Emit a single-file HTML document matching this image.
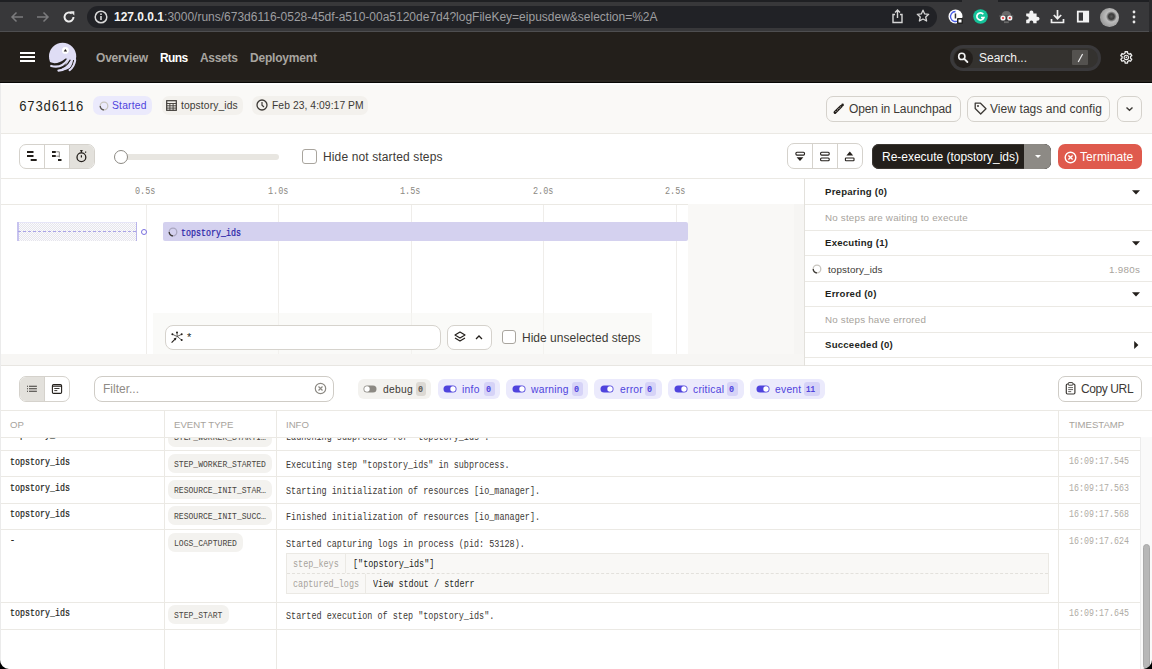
<!DOCTYPE html>
<html><head><meta charset="utf-8">
<style>
*{box-sizing:border-box;margin:0;padding:0}
html,body{width:1152px;height:669px;overflow:hidden;background:#fff;font-family:"Liberation Sans",sans-serif}
.a{position:absolute}
.t{position:absolute;white-space:nowrap;line-height:1}
.mono{font-family:"Liberation Mono",monospace}
svg{position:absolute;overflow:visible}
</style></head><body>
<!-- ================= BROWSER CHROME ================= -->
<div class="a" style="left:0;top:0;width:1152px;height:32px;background:#38383a"></div>
<div class="a" style="left:0;top:0;width:1152px;height:2px;background:#1f2023"></div>
<div class="a" style="left:0;top:31px;width:1152px;height:1px;background:#4e4e50"></div>
<div class="a" style="left:962px;top:0;width:36px;height:2px;background:#38383a;border-radius:0 0 0 0"></div>
<div class="a" style="left:1149px;top:0;width:3px;height:32px;background:#2a2a2c"></div>
<!-- nav arrows -->
<svg style="left:10px;top:11px" width="14" height="12" viewBox="0 0 14 12"><path d="M13 6H2M6.5 1.5L2 6l4.5 4.5" fill="none" stroke="#7b7b7d" stroke-width="1.5"/></svg>
<svg style="left:36px;top:11px" width="14" height="12" viewBox="0 0 14 12"><path d="M1 6h11M7.5 1.5L12 6l-4.5 4.5" fill="none" stroke="#7b7b7d" stroke-width="1.5"/></svg>
<svg style="left:62px;top:10px" width="14" height="14" viewBox="0 0 14 14"><path d="M11.5 7A4.5 4.5 0 1 1 9.8 3.5" fill="none" stroke="#eeeeee" stroke-width="2"/><path d="M8 1.2h4.3v4.3z" fill="#e8e8e8"/></svg>
<!-- url pill -->
<div class="a" style="left:87px;top:6px;width:850px;height:22px;border-radius:11px;background:#212226"></div>
<svg style="left:94px;top:10px" width="14" height="14" viewBox="0 0 14 14"><circle cx="7" cy="7" r="5.8" fill="none" stroke="#dadada" stroke-width="1.5"/><path d="M7 6v4" stroke="#dadada" stroke-width="1.6"/><circle cx="7" cy="4.2" r="0.9" fill="#dadada"/></svg>
<div class="t" style="left:114px;top:11px;font-size:12px;color:#9e9ea0"><span style="color:#f2f2f2;font-weight:bold">127.0.0.1</span>:3000/runs/673d6116-0528-45df-a510-00a5120de7d4?logFileKey=eipusdew&amp;selection=%2A</div>
<!-- share / star -->
<svg style="left:891px;top:9px" width="13" height="15" viewBox="0 0 13 15"><path d="M4 5.5H2v8h9v-8H9M6.5 1v8M4 3.5L6.5 1 9 3.5" fill="none" stroke="#d6d6d6" stroke-width="1.4"/></svg>
<svg style="left:916px;top:9px" width="14" height="14" viewBox="0 0 14 14"><path d="M7 1.2l1.7 3.7 4 .4-3 2.7.9 4L7 10 3.4 12l.9-4-3-2.7 4-.4z" fill="none" stroke="#d6d6d6" stroke-width="1.3" stroke-linejoin="round"/></svg>
<!-- extension icons -->
<svg style="left:948px;top:9px" width="16" height="16" viewBox="0 0 16 16"><circle cx="7.5" cy="7.5" r="7" fill="#fff"/><path d="M7.5 2.5a5 5 0 1 0 3 9" fill="none" stroke="#4a5ee8" stroke-width="1.3"/><rect x="6.7" y="4.5" width="1.5" height="5" fill="#333"/><rect x="9" y="9" width="6" height="6" rx="1" fill="#222"/><rect x="10.5" y="10.5" width="3" height="3" fill="#fff"/></svg>
<svg style="left:973px;top:9px" width="15" height="15" viewBox="0 0 15 15"><circle cx="7.5" cy="7.5" r="7.3" fill="#15c39a"/><path d="M10.3 5.2A3.6 3.6 0 1 0 10.9 8.5H8" fill="none" stroke="#fff" stroke-width="1.7"/></svg>
<svg style="left:998px;top:10px" width="17" height="15" viewBox="998 10 17 15"><path d="M1001.5 15.5Q1002 11 1006.4 11Q1010.8 11 1011.3 15.5z" fill="#6a6a6a"/><rect x="999.3" y="15" width="14" height="2" fill="#555"/><circle cx="1003" cy="18" r="2.6" fill="#f2f2f2"/><circle cx="1009.8" cy="18" r="2.6" fill="#f2f2f2"/><circle cx="1003" cy="18" r="1.1" fill="#e53030"/><circle cx="1009.8" cy="18" r="1.1" fill="#e53030"/><rect x="1004" y="21.3" width="4.8" height="1.8" fill="#6a6a6a"/></svg>
<svg style="left:1025px;top:9px" width="15" height="15" viewBox="1025 9 15 15"><path d="M1026.2 13.6h3.2q-.2-3 2-3t2 3h3.2v3.2q3-.2 3 2t-3 2v2.4h-3.3q.2-2.6-1.9-2.6t-1.9 2.6h-3.3v-3.4q2.6.2 2.6-1.8t-2.6-1.8z" fill="#f4f4f4"/></svg>
<svg style="left:1050px;top:9px" width="15" height="15" viewBox="0 0 15 15"><path d="M7.5 1v8.5M3.8 6l3.7 3.7L11.2 6M1.5 10v3.5h12V10" fill="none" stroke="#f0f0f0" stroke-width="1.7"/></svg>
<svg style="left:1076px;top:10px" width="14" height="14" viewBox="1076 10 14 14"><rect x="1077.8" y="11.6" width="10.4" height="10" fill="none" stroke="#f4f4f4" stroke-width="1.8"/><rect x="1083" y="11.6" width="5.2" height="10" fill="#f4f4f4"/></svg>
<div class="a" style="left:1100px;top:8px;width:18.5px;height:18.5px;border-radius:50%;background:radial-gradient(circle at 60% 45%,#5a5a5a 0,#3a3a3a 18%,#bdbdbd 35%,#9b9b9b 70%,#7a7a7a 100%)"></div>
<svg style="left:1132px;top:10px" width="4" height="14" viewBox="0 0 4 14"><circle cx="2" cy="2" r="1.4" fill="#e8e8e8"/><circle cx="2" cy="7" r="1.4" fill="#e8e8e8"/><circle cx="2" cy="12" r="1.4" fill="#e8e8e8"/></svg>

<!-- ================= DAGSTER NAV ================= -->
<div class="a" style="left:0;top:32px;width:1152px;height:51px;background:#231f1b"></div>
<div class="a" style="left:0;top:80px;width:1152px;height:2px;background:#2a2622"></div>
<div class="a" style="left:0;top:82px;width:1152px;height:1px;background:#080706"></div>
<div class="a" style="left:20px;top:52px;width:15px;height:2px;background:#fff"></div>
<div class="a" style="left:20px;top:56px;width:15px;height:2px;background:#fff"></div>
<div class="a" style="left:20px;top:60px;width:15px;height:2px;background:#fff"></div>
<svg style="left:44px;top:40px" width="36" height="34" viewBox="0 0 36 34">
 <circle cx="18.6" cy="16.4" r="13.6" fill="#dfddf5"/>
 <path d="M2 20Q11 27 21.6 18.4L24 19Q21 31 8 31 L2 31z" fill="#231f1b"/>
 <path d="M7.2 26Q17.5 29 24 19.4" fill="none" stroke="#dfddf5" stroke-width="2.2" stroke-linecap="round"/>
 <path d="M10 29.4Q21 30 26.4 19.8" fill="none" stroke="#231f1b" stroke-width="1.3"/>
 <path d="M14.4 30.6Q24 30.5 28.2 20.2" fill="none" stroke="#dfddf5" stroke-width="2.1" stroke-linecap="round"/>
 <path d="M22 32Q28 29 29.8 20" fill="none" stroke="#231f1b" stroke-width="1.2"/>
 <path d="M25.6 30.2Q30.5 26.5 31.2 20" fill="none" stroke="#dfddf5" stroke-width="2.1" stroke-linecap="round"/>
 <circle cx="21.4" cy="10.4" r="3.4" fill="#fff"/>
 <path d="M19.7 11.6l1.7-2.6 1.7 2.6z" fill="#231f1b"/>
</svg>
<div class="t" style="left:96px;top:52px;font-size:12px;font-weight:bold;color:#a8a5a0;letter-spacing:-0.2px">Overview</div>
<div class="t" style="left:160px;top:52px;font-size:12px;font-weight:bold;color:#fff;letter-spacing:-0.6px">Runs</div>
<div class="t" style="left:200px;top:52px;font-size:12px;font-weight:bold;color:#a8a5a0;letter-spacing:-0.3px">Assets</div>
<div class="t" style="left:250px;top:52px;font-size:12px;font-weight:bold;color:#a8a5a0;letter-spacing:-0.2px">Deployment</div>
<!-- search -->
<div class="a" style="left:950px;top:45px;width:151px;height:26px;border-radius:13px;background:#3a393b"></div>
<div class="a" style="left:953px;top:48px;width:145px;height:20px;border-radius:10px;background:#34322f"></div>
<div class="a" style="left:954px;top:48.5px;width:19px;height:19px;border-radius:50%;background:#231f1c"></div>
<svg style="left:955px;top:50px" width="16" height="16" viewBox="955 50 16 16"><circle cx="961.8" cy="56.4" r="3.1" fill="none" stroke="#f2f2f2" stroke-width="1.6"/><path d="M964.2 58.8l3.2 3.2" stroke="#f2f2f2" stroke-width="1.8" stroke-linecap="round"/></svg>
<div class="t" style="left:979px;top:52px;font-size:12px;color:#f0f0f0">Search...</div>
<div class="a" style="left:1072px;top:50px;width:16px;height:15px;border-radius:1px;background:#54524f"></div>
<svg style="left:1072px;top:50px" width="16" height="15" viewBox="1072 50 16 15"><path d="M1078.2 62l4.4-8" stroke="#eeeeee" stroke-width="1.2"/></svg>
<svg style="left:1118px;top:49px" width="17" height="17" viewBox="1118 49 17 17"><path d="M1124.97 53.31 L1125.09 51.73 L1127.51 51.73 L1127.63 53.31 L1129.18 54.20 L1130.61 53.52 L1131.82 55.61 L1130.51 56.51 L1130.51 58.29 L1131.82 59.19 L1130.61 61.28 L1129.18 60.60 L1127.63 61.49 L1127.51 63.07 L1125.09 63.07 L1124.97 61.49 L1123.42 60.60 L1121.99 61.28 L1120.78 59.19 L1122.09 58.29 L1122.09 56.51 L1120.78 55.61 L1121.99 53.52 L1123.42 54.20z" fill="none" stroke="#eeeeee" stroke-width="1.3" stroke-linejoin="round"/><circle cx="1126.3" cy="57.4" r="2.2" fill="none" stroke="#eeeeee" stroke-width="1.1"/><circle cx="1126.3" cy="57.4" r=".8" fill="#eeeeee"/></svg>

<!-- ================= RUN HEADER ================= -->
<div class="a" style="left:0;top:83px;width:1152px;height:51px;background:#faf9f7;border-bottom:1px solid #ebe9e4"></div>
<div class="a" style="left:0;top:83px;width:1152px;height:2px;background:#ffffff"></div>
<div class="t mono" style="left:19px;top:99px;font-size:13px;color:#231f1b;letter-spacing:0.3px;transform:scaleY(1.18);transform-origin:0 0">673d6116</div>
<div class="a" style="left:93px;top:96px;width:59px;height:19px;border-radius:7px;background:#ebeafc"></div>
<svg style="left:99px;top:101px" width="10" height="10" viewBox="0 0 10 10"><circle cx="5" cy="5" r="3.8" fill="none" stroke="#c8c5bf" stroke-width="1.3"/><path d="M1.2 5A3.8 3.8 0 0 0 5 8.8" fill="none" stroke="#5c5955" stroke-width="1.3"/></svg>
<div class="t" style="left:112px;top:101px;font-size:10.3px;color:#4f43dd;letter-spacing:0.2px">Started</div>
<div class="a" style="left:162px;top:96px;width:81px;height:19px;border-radius:7px;background:#f3f1ed"></div>
<svg style="left:166px;top:100px" width="11" height="11" viewBox="0 0 11 11"><rect x=".7" y=".7" width="9.6" height="9.6" fill="none" stroke="#3d3a36" stroke-width="1.2"/><path d="M.7 3.5h9.6M.7 5.8h9.6M.7 8.1h9.6M3.9 3.5v6.8M7.1 3.5v6.8" stroke="#3d3a36" stroke-width=".9"/></svg>
<div class="t" style="left:181px;top:101px;font-size:10.3px;color:#3d3a36;letter-spacing:0.1px">topstory_ids</div>
<div class="a" style="left:252px;top:96px;width:116px;height:19px;border-radius:7px;background:#f3f1ed"></div>
<svg style="left:256px;top:99px" width="12" height="12" viewBox="0 0 12 12"><circle cx="6" cy="6" r="5" fill="none" stroke="#3d3a36" stroke-width="1.3"/><path d="M6 3v3.2l2 1.8" fill="none" stroke="#3d3a36" stroke-width="1.2"/></svg>
<div class="t" style="left:272px;top:101px;font-size:10.3px;color:#3d3a36;letter-spacing:0.07px">Feb 23, 4:09:17 PM</div>
<!-- header buttons -->
<div class="a" style="left:826px;top:96px;width:135px;height:26px;border-radius:7px;border:1px solid #d5d2cc;background:#faf9f7"></div>
<svg style="left:830px;top:100px" width="18" height="18" viewBox="830 100 18 18"><path d="M835 112.4L841.2 106.2" stroke="#231f1b" stroke-width="2.9" stroke-linecap="round"/><path d="M835.6 111.8L840.6 106.8" stroke="#faf9f7" stroke-width=".9" stroke-dasharray="1 1"/><circle cx="842.6" cy="104.9" r="1.3" fill="#231f1b"/></svg>
<div class="t" style="left:849px;top:103px;font-size:12px;color:#3d3a36;letter-spacing:-0.13px">Open in Launchpad</div>
<div class="a" style="left:967px;top:96px;width:143px;height:26px;border-radius:7px;border:1px solid #d5d2cc;background:#faf9f7"></div>
<svg style="left:974px;top:102px" width="13" height="13" viewBox="0 0 13 13"><path d="M1.2 1.2h5.3l5.5 5.5-5.3 5.3-5.5-5.5z" fill="none" stroke="#3d3a36" stroke-width="1.3" stroke-linejoin="round"/><circle cx="4" cy="4" r="1" fill="#3d3a36"/></svg>
<div class="t" style="left:990px;top:103px;font-size:12px;color:#3d3a36;letter-spacing:0.07px">View tags and config</div>
<div class="a" style="left:1117px;top:96px;width:25px;height:26px;border-radius:7px;border:1px solid #d5d2cc;background:#faf9f7"></div>
<svg style="left:1125px;top:106px" width="9" height="6" viewBox="0 0 9 6"><path d="M1.5 1.5L4.5 4.3 7.5 1.5" fill="none" stroke="#3d3a36" stroke-width="1.4"/></svg>

<!-- ================= TOOLBAR ================= -->
<div class="a" style="left:0;top:134px;width:1152px;height:45px;background:#fff;border-bottom:1px solid #ebe9e4"></div>
<div class="a" style="left:19px;top:144px;width:76px;height:25px;border-radius:7px;border:1px solid #d5d2cc;overflow:hidden">
  <div class="a" style="left:24px;top:0;width:1px;height:25px;background:#d5d2cc"></div>
  <div class="a" style="left:49px;top:0;width:26px;height:25px;background:#e3e1dc;border-left:1px solid #d5d2cc"></div>
</div>
<svg style="left:20px;top:140px" width="25" height="25" viewBox="20 140 25 25"><path d="M27 152h6.5M27 156h6.5M30.7 160h6" stroke="#231f1b" stroke-width="1.9"/></svg>
<svg style="left:45px;top:140px" width="25" height="25" viewBox="45 140 25 25"><path d="M52 152h3.8M52 156h3.8M58 160h3.5" stroke="#231f1b" stroke-width="1.9"/><path d="M56.3 151.8h3v5.6M56.3 156.2h3" fill="none" stroke="#6b6762" stroke-width=".8"/></svg>
<svg style="left:70px;top:140px" width="25" height="25" viewBox="70 140 25 25"><circle cx="81.4" cy="157.2" r="4.4" fill="none" stroke="#231f1b" stroke-width="1.3"/><path d="M80.2 150.6h2.4M81.4 150.6v2.2M81.4 155.2v2.2M85.2 152.6l.9-.9" stroke="#231f1b" stroke-width="1.2"/></svg>
<!-- slider -->
<div class="a" style="left:121px;top:154px;width:158px;height:6px;border-radius:3px;background:#e8e6e1"></div>
<div class="a" style="left:114px;top:150px;width:14px;height:14px;border-radius:50%;background:#fff;border:1.5px solid #8c8983"></div>
<!-- checkbox -->
<div class="a" style="left:302px;top:149px;width:15px;height:15px;border-radius:3px;border:1.5px solid #a9a59e;background:#fff"></div>
<div class="t" style="left:323px;top:151px;font-size:12px;color:#3d3a36;letter-spacing:0.13px">Hide not started steps</div>
<!-- right group -->
<div class="a" style="left:787px;top:143px;width:76px;height:26px;border-radius:7px;border:1px solid #d5d2cc;background:#fff">
  <div class="a" style="left:24px;top:0;width:1px;height:24px;background:#d5d2cc"></div>
  <div class="a" style="left:49px;top:0;width:1px;height:24px;background:#d5d2cc"></div>
</div>
<svg style="left:790px;top:145px" width="22" height="22" viewBox="790 145 22 22"><rect x="795.9" y="152.3" width="8.6" height="2.8" rx="1" fill="none" stroke="#231f1b" stroke-width="1.1"/><path d="M796.6 157.3h6.8L800 161z" fill="#231f1b"/></svg>
<svg style="left:815px;top:145px" width="22" height="22" viewBox="815 145 22 22"><rect x="820.6" y="152.3" width="8.6" height="2.8" rx="1" fill="none" stroke="#231f1b" stroke-width="1.1"/><rect x="820.6" y="158" width="8.6" height="2.8" rx="1" fill="none" stroke="#231f1b" stroke-width="1.1"/></svg>
<svg style="left:840px;top:145px" width="22" height="22" viewBox="840 145 22 22"><path d="M846.4 155.4h6.8L849.8 151.6z" fill="#231f1b"/><rect x="845.4" y="158" width="8.6" height="2.8" rx=".6" fill="none" stroke="#231f1b" stroke-width="1.1"/></svg>
<div class="a" style="left:872px;top:144px;width:179px;height:25px;border-radius:7px;background:#231f1b;overflow:hidden;box-shadow:inset 0 0 0 1px #3a3632">
  <div class="a" style="left:152px;top:0;width:27px;height:25px;background:#8d8a85"></div>
</div>
<div class="t" style="left:882px;top:151px;font-size:12px;color:#fff;letter-spacing:-0.02px">Re-execute (topstory_ids)</div>
<svg style="left:1034px;top:154px" width="8" height="5" viewBox="0 0 8 5"><path d="M1 1h6L4 4z" fill="#fff"/></svg>
<div class="a" style="left:1058px;top:144px;width:84px;height:25px;border-radius:7px;background:#df5a4d"></div>
<svg style="left:1064px;top:150.5px" width="13" height="13" viewBox="0 0 13 13"><circle cx="6.5" cy="6.5" r="5.3" fill="none" stroke="#fff" stroke-width="1.4"/><path d="M4.4 4.4l4.2 4.2M8.6 4.4l-4.2 4.2" stroke="#fff" stroke-width="1.4"/></svg>
<div class="t" style="left:1080px;top:151px;font-size:12px;color:#fff;letter-spacing:0.07px">Terminate</div>

<!-- ================= TIMELINE ================= -->
<div class="a" style="left:0;top:179px;width:805px;height:175px;background:#fff"></div>
<div class="a" style="left:0;top:204px;width:805px;height:1px;background:#ebe9e4"></div>
<!-- tick lines -->
<div class="a" style="left:146px;top:205px;width:1px;height:149px;background:#efedea"></div>
<div class="a" style="left:278px;top:205px;width:1px;height:149px;background:#efedea"></div>
<div class="a" style="left:411px;top:205px;width:1px;height:149px;background:#efedea"></div>
<div class="a" style="left:543px;top:205px;width:1px;height:149px;background:#efedea"></div>
<div class="a" style="left:676px;top:205px;width:1px;height:149px;background:#efedea"></div>
<div class="t mono" style="left:135px;top:187.3px;font-size:8.50px;color:#8c8983;transform:scaleY(1.24);transform-origin:0 0">0.5s</div>
<div class="t mono" style="left:268px;top:187.3px;font-size:8.50px;color:#8c8983;transform:scaleY(1.24);transform-origin:0 0">1.0s</div>
<div class="t mono" style="left:400px;top:187.3px;font-size:8.50px;color:#8c8983;transform:scaleY(1.24);transform-origin:0 0">1.5s</div>
<div class="t mono" style="left:533px;top:187.3px;font-size:8.50px;color:#8c8983;transform:scaleY(1.24);transform-origin:0 0">2.0s</div>
<div class="t mono" style="left:665px;top:187.3px;font-size:8.50px;color:#8c8983;transform:scaleY(1.24);transform-origin:0 0">2.5s</div>
<!-- future region -->
<div class="a" style="left:688px;top:204px;width:106px;height:150px;background:#f9f8f6"></div>
<div class="a" style="left:794px;top:204px;width:10px;height:150px;background:#f6f5f3"></div>
<!-- pre-step dashed box -->
<div class="a" style="left:17px;top:222px;width:120px;height:19px;background:repeating-conic-gradient(#e6e5ec 0 25%,#fbfbfd 0 50%) 0 0/2px 2px;border-top:1px solid #e6e5f7"></div>
<div class="a" style="left:17px;top:222px;width:2px;height:19px;background:#c7c3ef"></div>
<div class="a" style="left:136px;top:222px;width:1px;height:19px;background:#b9b4ea"></div>
<div class="a" style="left:18px;top:231px;width:118px;height:1px;border-top:1px dashed #a9a3e6"></div>
<div class="a" style="left:141px;top:229px;width:6px;height:6px;border-radius:50%;border:1.2px solid #7a70e0"></div>
<!-- step bar -->
<div class="a" style="left:163px;top:222px;width:525px;height:19px;border-radius:2px;background:#d4d1ef"></div>
<svg style="left:168px;top:227px" width="10" height="10" viewBox="0 0 10 10"><circle cx="5" cy="5" r="3.8" fill="none" stroke="#aaa7c0" stroke-width="1.3"/><path d="M1.2 5A3.8 3.8 0 0 0 5 8.8" fill="none" stroke="#3d3a36" stroke-width="1.3"/></svg>
<div class="t mono" style="left:181px;top:229px;font-size:8.33px;color:#2a24a8;-webkit-text-stroke:0.2px #2a24a8;transform:scaleY(1.200);transform-origin:0 0">topstory_ids</div>
<!-- query bar backdrop -->
<div class="a" style="left:153px;top:313px;width:499px;height:41px;background:rgba(246,245,242,0.55)"></div>
<div class="a" style="left:164.5px;top:324.5px;width:276px;height:25.5px;border-radius:8px;border:1.8px solid #d6d3cd;background:#fff"></div>
<svg style="left:168px;top:328px" width="18" height="18" viewBox="168 328 18 18"><path d="M177.2 336.5L177 332.4M177.2 336.5L172.4 334.3M177.2 336.5L181.7 334.3M177.2 336.5L181.7 340.1" stroke="#231f1b" stroke-width=".7"/><circle cx="177" cy="332.4" r="1" fill="#231f1b"/><circle cx="172.4" cy="334.3" r="1" fill="#231f1b"/><circle cx="181.7" cy="334.3" r="1" fill="#231f1b"/><circle cx="181.7" cy="340.1" r="1" fill="#231f1b"/><path d="M171.6 342.7L175.6 338.7" stroke="#231f1b" stroke-width="1.2"/><path d="M176.6 337.6L173.6 338.6 175.6 340.6z" fill="#231f1b"/></svg>
<div class="t" style="left:187px;top:332px;font-size:11px;color:#231f1b">*</div>
<div class="a" style="left:447px;top:325px;width:45px;height:25px;border-radius:7px;border:1px solid #d5d2cc;background:#fff"></div>
<svg style="left:454px;top:331px" width="12" height="12" viewBox="0 0 12 12"><path d="M6 1l5 3-5 3-5-3z" fill="none" stroke="#231f1b" stroke-width="1.2" stroke-linejoin="round"/><path d="M1 7l5 3 5-3" fill="none" stroke="#231f1b" stroke-width="1.2" stroke-linejoin="round"/></svg>
<svg style="left:475px;top:335px" width="8" height="5" viewBox="0 0 8 5"><path d="M1 4l3-3 3 3" fill="none" stroke="#231f1b" stroke-width="1.3"/></svg>
<div class="a" style="left:502px;top:330px;width:14px;height:14px;border-radius:3px;border:1.5px solid #a9a59e;background:#fff"></div>
<div class="t" style="left:522px;top:331.5px;font-size:12px;color:#3d3a36;letter-spacing:0.02px">Hide unselected steps</div>
<!-- splitter -->
<div class="a" style="left:0;top:354px;width:805px;height:12px;background:#f7f6f4"></div>
<div class="a" style="left:0;top:365px;width:1152px;height:2px;background:#e8e6e2"></div>

<!-- ================= RIGHT PANEL ================= -->
<div class="a" style="left:804px;top:179px;width:1px;height:187px;background:#e3e1dc"></div>
<div class="a" style="left:805px;top:179px;width:347px;height:186px;background:#fff"></div>
<div class="a" style="left:805px;top:204px;width:347px;height:1px;background:#ebe9e4"></div>
<div class="a" style="left:805px;top:230px;width:347px;height:1px;background:#ebe9e4"></div>
<div class="a" style="left:805px;top:255px;width:347px;height:1px;background:#ebe9e4"></div>
<div class="a" style="left:805px;top:281px;width:347px;height:1px;background:#ebe9e4"></div>
<div class="a" style="left:805px;top:306px;width:347px;height:1px;background:#ebe9e4"></div>
<div class="a" style="left:805px;top:332px;width:347px;height:1px;background:#ebe9e4"></div>
<div class="a" style="left:805px;top:357px;width:347px;height:1px;background:#ebe9e4"></div>
<div class="t" style="left:825px;top:186.5px;font-size:9.6px;font-weight:bold;color:#231f1b;letter-spacing:0.23px">Preparing (0)</div>
<div class="t" style="left:825px;top:212.5px;font-size:9.8px;color:#a7a39c;letter-spacing:0.2px">No steps are waiting to execute</div>
<div class="t" style="left:825px;top:237.5px;font-size:9.6px;font-weight:bold;color:#231f1b;letter-spacing:0.23px">Executing (1)</div>
<svg style="left:812px;top:264px" width="10" height="10" viewBox="0 0 10 10"><circle cx="5" cy="5" r="3.8" fill="none" stroke="#c8c5bf" stroke-width="1.3"/><path d="M1.2 5A3.8 3.8 0 0 0 5 8.8" fill="none" stroke="#3d3a36" stroke-width="1.3"/></svg>
<div class="t" style="left:828px;top:264.5px;font-size:9.8px;color:#3d3a36;letter-spacing:0.15px">topstory_ids</div>
<div class="t" style="left:1109px;top:264.5px;font-size:9.8px;color:#a7a39c;letter-spacing:0.3px">1.980s</div>
<div class="t" style="left:825px;top:288.5px;font-size:9.6px;font-weight:bold;color:#231f1b;letter-spacing:0.23px">Errored (0)</div>
<div class="t" style="left:825px;top:314.5px;font-size:9.8px;color:#a7a39c;letter-spacing:0.2px">No steps have errored</div>
<div class="t" style="left:825px;top:339.5px;font-size:9.6px;font-weight:bold;color:#231f1b;letter-spacing:0.23px">Succeeded (0)</div>
<svg style="left:1132px;top:190px" width="8" height="5" viewBox="0 0 8 5"><path d="M0 .2h8L4 4.4z" fill="#231f1b"/></svg>
<svg style="left:1132px;top:241px" width="8" height="5" viewBox="0 0 8 5"><path d="M0 .2h8L4 4.4z" fill="#231f1b"/></svg>
<svg style="left:1132px;top:292px" width="8" height="5" viewBox="0 0 8 5"><path d="M0 .2h8L4 4.4z" fill="#231f1b"/></svg>
<svg style="left:1134px;top:341px" width="5" height="8" viewBox="0 0 5 8"><path d="M.2 0v8L4.4 4z" fill="#231f1b"/></svg>

<!-- ================= LOG TOOLBAR ================= -->
<div class="a" style="left:0;top:366px;width:1152px;height:44px;background:#fff"></div>
<div class="a" style="left:0;top:410px;width:1152px;height:1px;background:#ebe9e4"></div>
<div class="a" style="left:19px;top:376px;width:51px;height:26px;border-radius:7px;border:1px solid #d5d2cc;overflow:hidden;background:#fff">
  <div class="a" style="left:0;top:0;width:25px;height:26px;background:#e3e1dc;border-right:1px solid #d5d2cc"></div>
</div>
<svg style="left:25px;top:383px" width="14" height="11" viewBox="25 383 14 11"><path d="M27 386.3h1M27 388.8h1M27 391.3h1M29 386.3h7.9M29 388.8h7.9M29 391.3h7.9" stroke="#3d3a36" stroke-width="1.1"/></svg>
<svg style="left:50px;top:382px" width="14" height="13" viewBox="50 382 14 13"><rect x="52.4" y="384.6" width="9.2" height="8.8" rx="1.2" fill="none" stroke="#231f1b" stroke-width="1.1"/><path d="M52.4 386.2h9.2" stroke="#231f1b" stroke-width="1.1"/><path d="M54.3 388.5h5.2M54.3 390.6h3" stroke="#231f1b" stroke-width=".9"/></svg>
<div class="a" style="left:94px;top:376px;width:240px;height:26px;border-radius:8px;border:1px solid #cfccc6;background:#fff"></div>
<div class="t" style="left:103px;top:383px;font-size:12px;color:#8f8b85">Filter...</div>
<svg style="left:314px;top:382px" width="13" height="13" viewBox="0 0 13 13"><circle cx="6.5" cy="6.5" r="5.2" fill="none" stroke="#8c8983" stroke-width="1.2"/><path d="M4.5 4.5l4 4M8.5 4.5l-4 4" stroke="#8c8983" stroke-width="1.2"/></svg>
<!-- chips -->
<div class="a" style="left:358px;top:379px;width:73px;height:20px;border-radius:6px;background:#f3f2ef"></div>
<svg style="left:363px;top:385px" width="14" height="8" viewBox="0 0 14 8"><rect x=".5" y=".5" width="13" height="7" rx="3.5" fill="#8c8983"/><circle cx="4" cy="4" r="2.7" fill="#fff"/></svg>
<div class="t" style="left:383px;top:384.5px;font-size:10.3px;color:#3d3a36;letter-spacing:0.25px">debug</div>
<div class="a" style="left:416px;top:382px;width:10px;height:14px;border-radius:3px;background:#dcd9d4"></div>
<div class="t mono" style="left:418px;top:385.5px;font-size:8.5px;font-weight:bold;color:#5c5955">0</div>

<div class="a" style="left:438px;top:379px;width:62px;height:20px;border-radius:6px;background:#ebeafc"></div>
<svg style="left:443px;top:385px" width="14" height="8" viewBox="0 0 14 8"><rect x=".5" y=".5" width="13" height="7" rx="3.5" fill="#4f43dd"/><circle cx="10" cy="4" r="2.7" fill="#fff"/></svg>
<div class="t" style="left:462px;top:384.5px;font-size:10.3px;color:#4f43dd;letter-spacing:0.25px">info</div>
<div class="a" style="left:484px;top:382px;width:11px;height:14px;border-radius:3px;background:#d6d3f7"></div>
<div class="t mono" style="left:486px;top:385.5px;font-size:8.5px;font-weight:bold;color:#4f43dd">0</div>

<div class="a" style="left:506px;top:379px;width:82px;height:20px;border-radius:6px;background:#ebeafc"></div>
<svg style="left:512px;top:385px" width="14" height="8" viewBox="0 0 14 8"><rect x=".5" y=".5" width="13" height="7" rx="3.5" fill="#4f43dd"/><circle cx="10" cy="4" r="2.7" fill="#fff"/></svg>
<div class="t" style="left:531px;top:384.5px;font-size:10.3px;color:#4f43dd;letter-spacing:0.25px">warning</div>
<div class="a" style="left:572px;top:382px;width:11px;height:14px;border-radius:3px;background:#d6d3f7"></div>
<div class="t mono" style="left:574px;top:385.5px;font-size:8.5px;font-weight:bold;color:#4f43dd">0</div>

<div class="a" style="left:594px;top:379px;width:68px;height:20px;border-radius:6px;background:#ebeafc"></div>
<svg style="left:600px;top:385px" width="14" height="8" viewBox="0 0 14 8"><rect x=".5" y=".5" width="13" height="7" rx="3.5" fill="#4f43dd"/><circle cx="10" cy="4" r="2.7" fill="#fff"/></svg>
<div class="t" style="left:620px;top:384.5px;font-size:10.3px;color:#4f43dd;letter-spacing:0.25px">error</div>
<div class="a" style="left:645px;top:382px;width:11px;height:14px;border-radius:3px;background:#d6d3f7"></div>
<div class="t mono" style="left:647px;top:385.5px;font-size:8.5px;font-weight:bold;color:#4f43dd">0</div>

<div class="a" style="left:668px;top:379px;width:76px;height:20px;border-radius:6px;background:#ebeafc"></div>
<svg style="left:674px;top:385px" width="14" height="8" viewBox="0 0 14 8"><rect x=".5" y=".5" width="13" height="7" rx="3.5" fill="#4f43dd"/><circle cx="10" cy="4" r="2.7" fill="#fff"/></svg>
<div class="t" style="left:693px;top:384.5px;font-size:10.3px;color:#4f43dd;letter-spacing:0.25px">critical</div>
<div class="a" style="left:727px;top:382px;width:11px;height:14px;border-radius:3px;background:#d6d3f7"></div>
<div class="t mono" style="left:729px;top:385.5px;font-size:8.5px;font-weight:bold;color:#4f43dd">0</div>

<div class="a" style="left:750px;top:379px;width:75px;height:20px;border-radius:6px;background:#ebeafc"></div>
<svg style="left:756px;top:385px" width="14" height="8" viewBox="0 0 14 8"><rect x=".5" y=".5" width="13" height="7" rx="3.5" fill="#4f43dd"/><circle cx="10" cy="4" r="2.7" fill="#fff"/></svg>
<div class="t" style="left:775px;top:384.5px;font-size:10.3px;color:#4f43dd;letter-spacing:0.25px">event</div>
<div class="a" style="left:804px;top:382px;width:16px;height:14px;border-radius:3px;background:#d6d3f7"></div>
<div class="t mono" style="left:806px;top:385.5px;font-size:7.67px;font-weight:bold;color:#4f43dd;transform:scaleY(1.109);transform-origin:0 0">11</div>

<div class="a" style="left:1058px;top:376px;width:84px;height:26px;border-radius:7px;border:1px solid #cfccc6;background:#fff"></div>
<svg style="left:1064px;top:381px" width="14" height="15" viewBox="1064 381 14 15"><rect x="1066.3" y="384" width="8.6" height="10" rx="1.2" fill="none" stroke="#3d3a36" stroke-width="1.2"/><rect x="1068.3" y="382.6" width="4.6" height="2.6" rx=".6" fill="#fff" stroke="#3d3a36" stroke-width="1"/><path d="M1068.2 387.6h4.8M1068.2 389.6h4.8M1068.2 391.6h3" stroke="#3d3a36" stroke-width=".8"/></svg>
<div class="t" style="left:1081px;top:383px;font-size:12px;color:#3d3a36;letter-spacing:-0.4px">Copy URL</div>

<!-- ================= TABLE ================= -->
<div class="a" style="left:0;top:411px;width:1140px;height:258px;background:#fff"></div>
<div class="a" style="left:164px;top:411px;width:1px;height:258px;background:#ebe9e4"></div>
<div class="a" style="left:276px;top:411px;width:1px;height:258px;background:#ebe9e4"></div>
<div class="a" style="left:1058px;top:411px;width:1px;height:258px;background:#ebe9e4"></div>
<!-- partial row clipped -->
<div class="a" style="left:0;top:424px;width:1140px;height:26px;overflow:hidden;clip-path:inset(13px 0 0 0)">
  <div class="t mono" style="left:10px;top:7px;font-size:8.33px;color:#231f1b;-webkit-text-stroke:0.18px #231f1b;transform:scaleY(1.200);transform-origin:0 0">topstory_ids</div>
  <div class="a" style="left:168px;top:4px;width:104px;height:19px;border-radius:7px;background:#f3f2ef"></div>
  <div class="t mono" style="left:174px;top:9px;font-size:8.07px;color:#4a4742;transform:scaleY(1.197);transform-origin:0 0">STEP_WORKER_STARTI…</div>
  <div class="t mono" style="left:286px;top:9px;font-size:8.48px;color:#3d3a36;transform:scaleY(1.195);transform-origin:0 0">Launching subprocess for "topstory_ids".</div>
</div>
<div class="a" style="left:0;top:437px;width:1140px;height:1px;background:#ebe9e4"></div>
<div class="a" style="left:0;top:450px;width:1140px;height:1px;background:#ebe9e4"></div>
<div class="a" style="left:0;top:476px;width:1140px;height:1px;background:#ebe9e4"></div>
<div class="a" style="left:0;top:503px;width:1140px;height:1px;background:#ebe9e4"></div>
<div class="a" style="left:0;top:529px;width:1140px;height:1px;background:#ebe9e4"></div>
<div class="a" style="left:0;top:602px;width:1140px;height:1px;background:#ebe9e4"></div>
<div class="a" style="left:0;top:629px;width:1140px;height:1px;background:#ebe9e4"></div>
<!-- header -->
<div class="t" style="left:10px;top:420px;font-size:9.6px;color:#a7a39c">OP</div>
<div class="t" style="left:174px;top:420px;font-size:9.6px;color:#a7a39c">EVENT TYPE</div>
<div class="t" style="left:286px;top:420px;font-size:9.6px;color:#a7a39c">INFO</div>
<div class="t" style="left:1069px;top:420px;font-size:9.6px;color:#a7a39c">TIMESTAMP</div>
<!-- rows -->
<div class="t mono" style="left:10px;top:458px;font-size:8.33px;color:#231f1b;-webkit-text-stroke:0.18px #231f1b;transform:scaleY(1.200);transform-origin:0 0">topstory_ids</div>
<div class="a" style="left:168px;top:454px;width:104px;height:19px;border-radius:7px;background:#f3f2ef"></div>
<div class="t mono" style="left:174px;top:460px;font-size:8.07px;color:#4a4742;transform:scaleY(1.134);transform-origin:0 0">STEP_WORKER_STARTED</div>
<div class="t mono" style="left:286px;top:461px;font-size:8.48px;color:#3d3a36;transform:scaleY(1.195);transform-origin:0 0">Executing step "topstory_ids" in subprocess.</div>
<div class="t mono" style="left:1069px;top:457px;font-size:8.33px;color:#b0aca5;transform:scaleY(1.200);transform-origin:0 0">16:09:17.545</div>

<div class="t mono" style="left:10px;top:484px;font-size:8.33px;color:#231f1b;-webkit-text-stroke:0.18px #231f1b;transform:scaleY(1.200);transform-origin:0 0">topstory_ids</div>
<div class="a" style="left:168px;top:480px;width:104px;height:19px;border-radius:7px;background:#f3f2ef"></div>
<div class="t mono" style="left:174px;top:486px;font-size:8.07px;color:#4a4742;transform:scaleY(1.134);transform-origin:0 0">RESOURCE_INIT_STAR…</div>
<div class="t mono" style="left:286px;top:487px;font-size:8.48px;color:#3d3a36;transform:scaleY(1.195);transform-origin:0 0">Starting initialization of resources [io_manager].</div>
<div class="t mono" style="left:1069px;top:484px;font-size:8.33px;color:#b0aca5;transform:scaleY(1.200);transform-origin:0 0">16:09:17.563</div>

<div class="t mono" style="left:10px;top:510px;font-size:8.33px;color:#231f1b;-webkit-text-stroke:0.18px #231f1b;transform:scaleY(1.200);transform-origin:0 0">topstory_ids</div>
<div class="a" style="left:168px;top:506px;width:104px;height:19px;border-radius:7px;background:#f3f2ef"></div>
<div class="t mono" style="left:174px;top:512px;font-size:8.07px;color:#4a4742;transform:scaleY(1.134);transform-origin:0 0">RESOURCE_INIT_SUCC…</div>
<div class="t mono" style="left:286px;top:513px;font-size:8.48px;color:#3d3a36;transform:scaleY(1.195);transform-origin:0 0">Finished initialization of resources [io_manager].</div>
<div class="t mono" style="left:1069px;top:510px;font-size:8.33px;color:#b0aca5;transform:scaleY(1.200);transform-origin:0 0">16:09:17.568</div>

<div class="t mono" style="left:10px;top:536px;font-size:8.33px;color:#231f1b;-webkit-text-stroke:0.18px #231f1b;transform:scaleY(1.200);transform-origin:0 0">-</div>
<div class="a" style="left:168px;top:533px;width:75px;height:19px;border-radius:7px;background:#f3f2ef"></div>
<div class="t mono" style="left:174px;top:539px;font-size:8.07px;color:#4a4742;transform:scaleY(1.134);transform-origin:0 0">LOGS_CAPTURED</div>
<div class="t mono" style="left:286px;top:540px;font-size:8.48px;color:#3d3a36;transform:scaleY(1.195);transform-origin:0 0">Started capturing logs in process (pid: 53128).</div>
<div class="t mono" style="left:1069px;top:537px;font-size:8.33px;color:#b0aca5;transform:scaleY(1.200);transform-origin:0 0">16:09:17.624</div>
<!-- metadata table -->
<div class="a" style="left:286px;top:553px;width:763px;height:41px;background:#f9f8f6;border:1px solid #ebe9e4"></div>
<div class="a" style="left:287px;top:573px;width:761px;height:0;border-top:1px dashed #e3e1dc"></div>
<div class="a" style="left:345px;top:554px;width:1px;height:19px;background:#ebe9e4"></div>
<div class="a" style="left:365px;top:574px;width:1px;height:19px;background:#ebe9e4"></div>
<div class="t mono" style="left:293px;top:560px;font-size:8.48px;color:#a7a39c;transform:scaleY(1.195);transform-origin:0 0">step_keys</div>
<div class="t mono" style="left:353px;top:560px;font-size:8.48px;color:#231f1b;transform:scaleY(1.195);transform-origin:0 0">["topstory_ids"]</div>
<div class="t mono" style="left:293px;top:580px;font-size:8.48px;color:#a7a39c;transform:scaleY(1.195);transform-origin:0 0">captured_logs</div>
<div class="t mono" style="left:373px;top:580px;font-size:8.48px;color:#231f1b;transform:scaleY(1.195);transform-origin:0 0">View stdout / stderr</div>

<div class="t mono" style="left:10px;top:609px;font-size:8.33px;color:#231f1b;-webkit-text-stroke:0.18px #231f1b;transform:scaleY(1.200);transform-origin:0 0">topstory_ids</div>
<div class="a" style="left:168px;top:605px;width:61px;height:19px;border-radius:7px;background:#f3f2ef"></div>
<div class="t mono" style="left:174px;top:611px;font-size:8.07px;color:#4a4742;transform:scaleY(1.134);transform-origin:0 0">STEP_START</div>
<div class="t mono" style="left:286px;top:612px;font-size:8.48px;color:#3d3a36;transform:scaleY(1.195);transform-origin:0 0">Started execution of step "topstory_ids".</div>
<div class="t mono" style="left:1069px;top:609px;font-size:8.33px;color:#b0aca5;transform:scaleY(1.200);transform-origin:0 0">16:09:17.645</div>

<!-- scrollbar -->
<div class="a" style="left:1140px;top:437px;width:12px;height:232px;background:#fafafa;border-left:1px solid #ececec"></div>
<div class="a" style="left:1143px;top:544px;width:7px;height:125px;border-radius:3.5px;background:#b7b7b7;border:1px solid #a9a9a9"></div>
<div class="a" style="left:0;top:83px;width:1px;height:586px;background:#ebebeb"></div>
<!-- window corners -->
<svg style="left:0;top:660px" width="9" height="9" viewBox="0 0 9 9"><path d="M0 0v9h9A9 9 0 0 1 0 0z" fill="#000"/></svg>
<svg style="left:1143px;top:660px" width="9" height="9" viewBox="0 0 9 9"><path d="M9 0v9H0A9 9 0 0 0 9 0z" fill="#000"/></svg>

</body></html>
